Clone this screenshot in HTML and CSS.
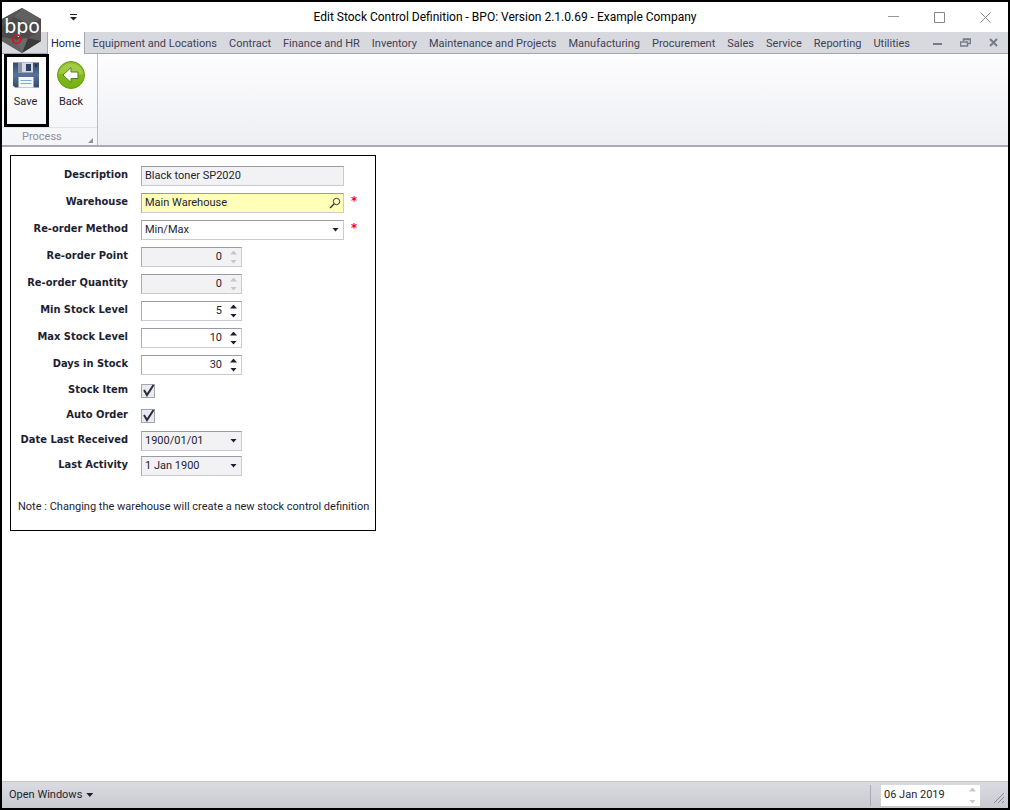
FILE: index.html
```html
<!DOCTYPE html>
<html lang="en">
<head>
<meta charset="utf-8">
<title>Edit Stock Control Definition</title>
<link rel="stylesheet" href="styles.css">
</head>
<body>
<div class="window">
  <header class="titlebar">
    <button class="quick-access" aria-label="Customize quick access"><svg width="9" height="7" viewBox="0 0 9 7"><path d="M1 0h7v1H1zM1 3h7L4.500 6.500z" fill="#222"/></svg></button>
    <h1 class="title">Edit Stock Control Definition - BPO: Version 2.1.0.69 - Example Company</h1>
    <div class="window-buttons">
      <button aria-label="Minimize"><svg width="11" height="11" viewBox="0 0 11 11"><path d="M0 4.500h11" stroke="#999"/></svg></button>
      <button aria-label="Maximize"><svg width="11" height="11" viewBox="0 0 11 11"><path d="M.5.5h10v10H.5z" fill="none" stroke="#888"/></svg></button>
      <button aria-label="Close"><svg width="11" height="11" viewBox="0 0 11 11"><path d="M.5.5l10 10M10.500.5l-10 10" stroke="#888"/></svg></button>
    </div>
  </header>
  <svg class="logo" width="41" height="45" viewBox="0 0 41 45" role="img" aria-label="bpo">
    <path d="M20 0L39 11V33L20 45L0 33V11z" fill="#4b4b4b"/>
    <path d="M20 0L39 11L26 16L12 9z" fill="#606060"/>
    <path d="M20 0L12 9L0 19V11z" fill="#565656"/>
    <path d="M0 29L12 31L20 45L0 33z" fill="#626262"/>
    <path d="M39 33L26 30L20 45z" fill="#3a3a3a"/>
    <path d="M26 30L39 22V33z" fill="#5a5a5a"/>
    <path d="M12 31L26 30L20 45z" fill="#6a6a6a"/>
    <text class="logo-text" x="20" y="25" text-anchor="middle">bpo</text>
    <path d="M12 27.500L17 27L19.500 31L17 35L12 35L10 31z" fill="none" stroke="#d3151c" stroke-width="1.500"/>
    <path d="M15 29v4M13 31h4" stroke="#8c2a2d"/>
  </svg>
  <nav class="tabs">
    <a href="#" class="tab tab-active">Home</a>
    <a href="#" class="tab">Equipment and Locations</a>
    <a href="#" class="tab">Contract</a>
    <a href="#" class="tab">Finance and HR</a>
    <a href="#" class="tab">Inventory</a>
    <a href="#" class="tab">Maintenance and Projects</a>
    <a href="#" class="tab">Manufacturing</a>
    <a href="#" class="tab">Procurement</a>
    <a href="#" class="tab">Sales</a>
    <a href="#" class="tab">Service</a>
    <a href="#" class="tab">Reporting</a>
    <a href="#" class="tab">Utilities</a>
    <div class="child-buttons">
      <button aria-label="Minimize form"><svg width="11" height="9" viewBox="0 0 11 9"><path d="M1 5h9v2H1z" fill="#777b86"/></svg></button>
      <button aria-label="Restore form"><svg width="11" height="9" viewBox="0 0 11 9"><path d="M3.500 3V1H10.500V5.500H8M3 1.500h8M.5 4H7.500V8H.5z" fill="none" stroke="#777b86" stroke-width="1.500"/></svg></button>
      <button aria-label="Close form"><svg width="11" height="9" viewBox="0 0 11 9"><path d="M2 1l7 7M9 1L2 8" stroke="#777b86" stroke-width="2"/></svg></button>
    </div>
  </nav>
  <section class="ribbon">
    <div class="ribbon-group">
      <div class="ribbon-items">
        <button class="command command-marked">
          <svg width="28" height="28" viewBox="0 0 28 28">
            <defs><linearGradient id="disk" x2="0" y2="1"><stop stop-color="#34486a"/><stop offset=".5" stop-color="#57749c"/><stop offset="1" stop-color="#34496b"/></linearGradient></defs>
            <path d="M1 1.500h26v25H3L1 24.500z" fill="url(#disk)"/>
            <path d="M6 1.500h15v10H6z" fill="#d5dae2"/>
            <path d="M6 1.500h4v10H6z" fill="#8794aa"/>
            <path d="M14 3h5v7H14z" fill="#2d405f"/>
            <path d="M23 3h2v3h-2z" fill="#263855"/>
            <path d="M6.500 16h15v10.500h-15z" fill="#f4f6fa"/>
            <path d="M8.500 19.500h11M8.500 22.500h11" stroke="#83a8d8"/>
          </svg>
          <span>Save</span>
        </button>
        <button class="command">
          <svg width="28" height="28" viewBox="0 0 28 28">
            <defs><linearGradient id="ball" x2="0" y2="1"><stop stop-color="#8fbf2f"/><stop offset=".5" stop-color="#83b81c"/><stop offset="1" stop-color="#74b010"/></linearGradient></defs>
            <circle cx="14" cy="14" r="13.500" fill="url(#ball)" stroke="#659d12"/>
            <path d="M1.500 13C4-1 24-1 26.500 13C18 15 10 11 1.500 13z" fill="#bedd69" opacity=".45"/>
            <path d="M6 14L14 6.500V11H21V17.500H14V21.500z" fill="#fff" stroke="#547f18"/>
          </svg>
          <span>Back</span>
        </button>
      </div>
      <div class="group-caption">Process<svg class="launcher" width="5" height="5" viewBox="0 0 5 5"><path d="M5 0v5H0z" fill="#8d8f99"/></svg></div>
    </div>
  </section>
  <main class="content">
    <form class="panel">
      <div class="row">
        <label for="description">Description</label>
        <input class="box wide muted" id="description" value="Black toner SP2020" readonly>
      </div>
      <div class="row">
        <label for="warehouse">Warehouse</label>
        <div class="box wide lookup"><input id="warehouse" value="Main Warehouse"><button type="button" aria-label="Find warehouse"><svg width="12" height="12" viewBox="0 0 12 12"><circle cx="7.500" cy="4.500" r="3.200" fill="none" stroke="#333"/><path d="M5 7L1 11" stroke="#333" stroke-width="1.500"/></svg></button></div>
        <span class="required">*</span>
      </div>
      <div class="row">
        <label for="method">Re-order Method</label>
        <div class="box wide pick"><select id="method"><option>Min/Max</option></select></div>
        <span class="required">*</span>
      </div>
      <div class="row">
        <label for="point">Re-order Point</label>
        <div class="box spin muted"><input id="point" value="0" readonly><span class="arrows"><button type="button" class="up" aria-label="Increase"></button><button type="button" class="down" aria-label="Decrease"></button></span></div>
      </div>
      <div class="row">
        <label for="quantity">Re-order Quantity</label>
        <div class="box spin muted"><input id="quantity" value="0" readonly><span class="arrows"><button type="button" class="up" aria-label="Increase"></button><button type="button" class="down" aria-label="Decrease"></button></span></div>
      </div>
      <div class="row">
        <label for="min">Min Stock Level</label>
        <div class="box spin"><input id="min" value="5"><span class="arrows"><button type="button" class="up" aria-label="Increase"></button><button type="button" class="down" aria-label="Decrease"></button></span></div>
      </div>
      <div class="row">
        <label for="max">Max Stock Level</label>
        <div class="box spin"><input id="max" value="10"><span class="arrows"><button type="button" class="up" aria-label="Increase"></button><button type="button" class="down" aria-label="Decrease"></button></span></div>
      </div>
      <div class="row">
        <label for="days">Days in Stock</label>
        <div class="box spin"><input id="days" value="30"><span class="arrows"><button type="button" class="up" aria-label="Increase"></button><button type="button" class="down" aria-label="Decrease"></button></span></div>
      </div>
      <div class="row short">
        <label for="stock-item">Stock Item</label>
        <span class="check"><input type="checkbox" id="stock-item" checked><svg width="14" height="14" viewBox="0 0 14 14"><path d="M3 6L6 11L12.500 1" fill="none" stroke="#2a2a3c" stroke-width="2"/></svg></span>
      </div>
      <div class="row short">
        <label for="auto-order">Auto Order</label>
        <span class="check"><input type="checkbox" id="auto-order" checked><svg width="14" height="14" viewBox="0 0 14 14"><path d="M3 6L6 11L12.500 1" fill="none" stroke="#2a2a3c" stroke-width="2"/></svg></span>
      </div>
      <div class="row short">
        <label for="received">Date Last Received</label>
        <div class="box pick muted"><select id="received"><option>1900/01/01</option></select></div>
      </div>
      <div class="row short">
        <label for="activity">Last Activity</label>
        <div class="box pick muted"><select id="activity"><option>1 Jan 1900</option></select></div>
      </div>
      <p class="note">Note : Changing the warehouse will create a new stock control definition</p>
    </form>
  </main>
  <footer class="statusbar">
    <button class="open-windows">Open Windows<span class="caret"></span></button>
    <div class="status-right">
      <div class="date spin muted"><input aria-label="Date" value="06 Jan 2019"><span class="arrows"><button type="button" class="up" aria-label="Next day"></button><button type="button" class="down" aria-label="Previous day"></button></span></div>
      <svg class="grip" width="12" height="12" viewBox="0 0 12 12"><path d="M1 11L11 1M5 11L11 5M9 11L11 9" stroke="#888b95"/></svg>
    </div>
  </footer>
</div>
</body>
</html>
```
FILE: styles.css
```css
* { box-sizing: border-box; }
body {
  margin: 0;
  font: 11px/14px Roboto, "Liberation Sans", sans-serif;
  color: #1e1e32;
}
button, input, select { font: inherit; color: inherit; margin: 0; }
button { border: 0; padding: 0; background: none; }

.window {
  position: relative;
  display: flex;
  flex-direction: column;
  min-height: 100vh;
  border: 2px solid #000;
  background: #fff;
}
.titlebar {
  display: grid;
  grid-template-columns: 128px 1fr 128px;
  align-items: center;
  height: 30px;
}
.quick-access { justify-self: start; margin-left: 67px; display: flex; }
.title {
  margin: 0;
  text-align: center;
  font: 12px/16px Roboto, sans-serif;
  color: #000;
}
.window-buttons { display: flex; gap: 35px; justify-content: flex-end; padding-right: 17px; }
.window-buttons button, .child-buttons button { display: flex; }
.logo { position: absolute; left: 0; top: 6px; }
.logo-text { font: 19px "DejaVu Sans", sans-serif; fill: #fff; }

.tabs {
  display: flex;
  height: 22px;
  padding-left: 45px;
  background: #d8d9df;
  border-bottom: 1px solid #a5a6b0;
}
.tab {
  padding: 5px 6px 0;
  color: #3f3f55;
  text-decoration: none;
  white-space: nowrap;
}
.tab-active {
  height: 22px;
  margin-right: 2px;
  padding: 5px 3px 0;
  background: #fdfdfe;
  border: solid #a5a6b0;
  border-width: 0 1px;
  color: #1e1e46;
}
.child-buttons { display: flex; align-items: center; gap: 17px; margin-left: auto; padding-right: 9px; }

.ribbon {
  display: flex;
  height: 93px;
  background: linear-gradient(#fdfdfe, #eeeff3);
  border-bottom: 2px solid #a9aab3;
}
.ribbon-group {
  display: flex;
  flex-direction: column;
  width: 96px;
  background: linear-gradient(#fff, #f4f5f8);
  border-right: 1px solid #b9bac3;
}
.ribbon-items { display: flex; padding-left: 2px; }
.command {
  display: flex;
  flex-direction: column;
  align-items: center;
  gap: 6px;
  width: 44px;
  height: 73px;
  padding: 7px 0 0;
}
.command-marked { width: 45px; padding: 4px 2px 0 0; border: 3px solid #000; }
.group-caption {
  display: flex;
  align-items: center;
  justify-content: space-between;
  padding: 2px 4px 0 20px;
  border-top: 1px solid #e2e3e9;
  color: #8d8f9c;
}
.launcher { margin-top: 6px; }

.content { flex: 1; padding: 8px; }
.panel {
  width: 366px;
  padding: 6px 7px 16px;
  border: 1px solid #000;
}
.row {
  display: grid;
  grid-template-columns: 110px auto auto;
  column-gap: 13px;
  justify-content: start;
  align-items: center;
  height: 27px;
}
.row.short { height: 25px; }
.row label {
  padding-bottom: 2px;
  text-align: right;
  font-family: "DejaVu Sans Condensed", "DejaVu Sans", sans-serif;
  font-weight: bold;
  white-space: nowrap;
}
.box {
  display: flex;
  width: 101px;
  height: 20px;
  background: #fff;
  border: 1px solid #c9cad2;
  border-top-color: #9a9ba8;
  border-left-color: #a9aab5;
}
.box input, .box select, .date input {
  flex: 1;
  min-width: 0;
  padding: 0 3px;
  border: 0;
  background: none;
  outline: 0;
}
.wide { width: 203px; }
input.box { padding: 0 3px; outline: 0; }
.muted { background: #f2f2f5; }
.lookup { background: #ffffba; }
.lookup button { display: flex; align-items: center; padding-right: 2px; }
.box select { appearance: none; }
.pick { align-items: center; padding-right: 4px; }
.pick::after, .caret {
  content: "";
  width: 7px;
  height: 4px;
  background: #1e1e32;
  clip-path: polygon(0 0, 100% 0, 50% 100%);
}
.spin input { padding-right: 0; text-align: right; }
.arrows {
  display: flex;
  flex-direction: column;
  justify-content: space-between;
  padding: 3px 4px 2px 8px;
}
.arrows button {
  width: 7px;
  height: 4px;
  background: #1e1e32;
  clip-path: polygon(0 0, 100% 0, 50% 100%);
}
.arrows .up { clip-path: polygon(50% 0, 100% 100%, 0 100%); }
.muted .arrows button { background: #c6c7cd; }
.required {
  margin-left: -6px;
  padding-bottom: 3px;
  font: bold 13px/14px "DejaVu Sans Condensed", sans-serif;
  color: #f00;
}
.check { display: grid; width: 14px; height: 14px; }
.check > * { grid-area: 1 / 1; }
.check input {
  appearance: none;
  width: 14px;
  height: 14px;
  border: 1px solid #a3a4b0;
  background: #e9eaef;
}
.check svg { pointer-events: none; z-index: 1; }
.note { margin: 22px 0 0; white-space: nowrap; }

.statusbar {
  display: flex;
  align-items: center;
  justify-content: space-between;
  height: 27px;
  padding: 0 3px 0 7px;
  background: linear-gradient(#dbdce1, #c9cad0);
  border-top: 1px solid #c3c4cb;
}
.open-windows { display: flex; align-items: center; gap: 4px; }
.status-right {
  display: flex;
  align-items: center;
  gap: 13px;
  padding-left: 10px;
  border-left: 1px solid #a9aab3;
}
.date { display: flex; width: 99px; height: 21px; background: #fff; }
.date input { text-align: left; }
.grip { margin-top: 6px; }
```
